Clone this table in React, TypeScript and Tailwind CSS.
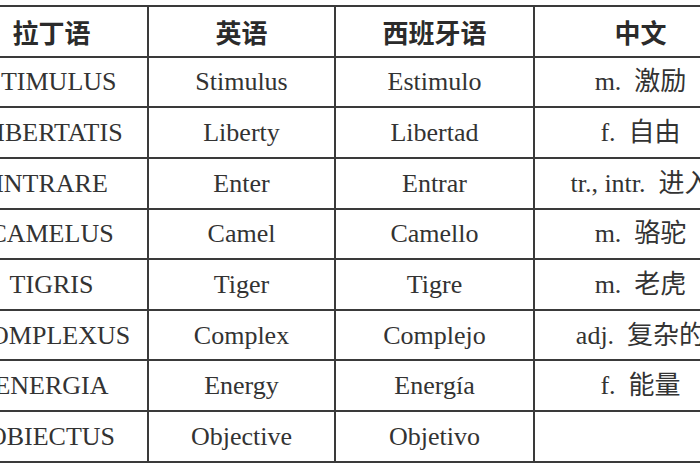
const rows: [string, string, string, string][] = [
  ["STIMULUS", "Stimulus", "Estimulo", "m.\u00a0\u00a0激励"],
  ["LIBERTATIS", "Liberty", "Libertad", "f.\u00a0\u00a0自由"],
  ["INTRARE", "Enter", "Entrar", "tr., intr.\u00a0\u00a0进入"],
  ["CAMELUS", "Camel", "Camello", "m.\u00a0\u00a0骆驼"],
  ["TIGRIS", "Tiger", "Tigre", "m.\u00a0\u00a0老虎"],
  ["COMPLEXUS", "Complex", "Complejo", "adj.\u00a0\u00a0复杂的"],
  ["ENERGIA", "Energy", "Energía", "f.\u00a0\u00a0能量"],
  ["OBIECTUS", "Objective", "Objetivo", ""],
];

const headers = ["拉丁语", "英语", "西班牙语", "中文"];

const cell =
  "flex items-center justify-center whitespace-nowrap border-b-2 border-r-2 border-[#3a3a3a] h-[50.65px]";

export default function App() {
  return (
    <div className="w-[700px] h-[470px] overflow-hidden bg-white pt-[5px]">
      <div
        className="ml-[-44px] w-[792px] grid grid-cols-[193px_187px_199px_213px] border-t-2 border-[#3a3a3a] text-[#333] text-[26px]"
        style={{ fontFamily: '"Liberation Serif", "Noto Sans CJK SC", serif' }}
      >
        {headers.map((h) => (
          <div
            key={h}
            className={`${cell} font-bold text-[#2b2b2b]`}
            style={{ fontFamily: '"Noto Sans CJK SC", sans-serif' }}
          >
            {h}
          </div>
        ))}
        {rows.map((r) =>
          r.map((t, i) => (
            <div key={r[0] + i} className={cell}>
              {t}
            </div>
          ))
        )}
      </div>
    </div>
  );
}
